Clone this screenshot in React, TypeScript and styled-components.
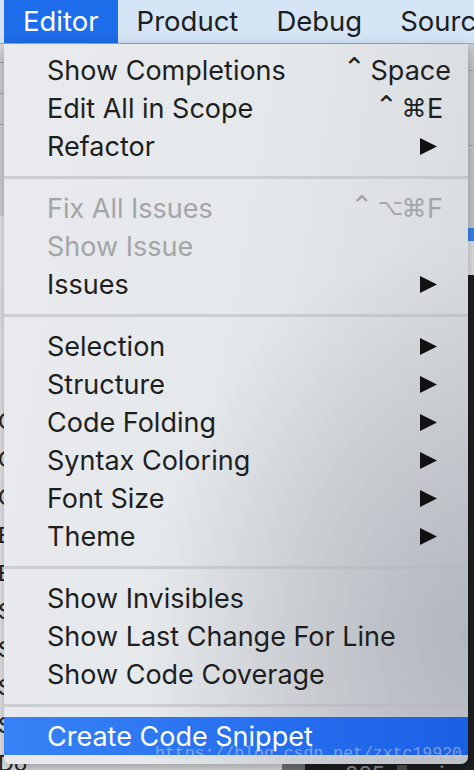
import React from "react";
import styled, { createGlobalStyle } from "styled-components";

const Global = createGlobalStyle`
  html, body { margin: 0; padding: 0; background: #1f2023; }
  body { font-family: Inter, "Noto Sans", "DejaVu Sans", sans-serif; }
  * { box-sizing: border-box; }
`;

const Screen = styled.div`
  position: relative;
  width: 474px;
  height: 770px;
  overflow: hidden;
  display: flex;
  flex-direction: column;
  background: #1f2023;
`;

const MenuBar = styled.div`
  height: 44px;
  flex: none;
  display: flex;
  align-items: stretch;
  padding-left: 4px;
  background: #d5e5f6;
  border-bottom: 1px solid #9fabb8;
`;

const BarItem = styled.div<{ $open?: boolean }>`
  display: flex;
  align-items: center;
  padding: 0 19px 1px;
  font-size: 27.5px;
  white-space: nowrap;
  color: ${(p) => (p.$open ? "#ffffff" : "#1b1d20")};
  background: ${(p) => (p.$open ? "#1d6ce9" : "transparent")};
`;

const Workspace = styled.div`
  flex: 1;
  display: flex;
  min-height: 0;
`;

const Navigator = styled.div`
  width: 282px;
  flex: none;
  display: flex;
  flex-direction: column;
  background: #eceef0;
`;

const NavToolbar = styled.div`
  height: 172px;
  flex: none;
  background: #d6d8db;
  display: flex;
  flex-direction: column;
  gap: 30px;
  padding-top: 18px;
`;

const HLine = styled.div`
  height: 1px;
  background: #a9acb0;
`;

const NavList = styled.div`
  display: flex;
  flex-direction: column;
  padding-top: 186px;
  font-size: 22px;
  color: #222;
  line-height: 38px;
`;

const NavItem = styled.div`
  white-space: nowrap;
  margin-left: -2px;
`;

const Splitter = styled.div`
  width: 23px;
  flex: none;
  background: #7d7e80;
`;

const EditorSide = styled.div`
  flex: 1;
  display: flex;
  flex-direction: column;
`;

const Inspector = styled.div`
  height: 184px;
  flex: none;
  background: #caced3;
  display: flex;
  flex-direction: column;
  gap: 74px;
  padding-top: 26px;
`;

const SelectedBar = styled.div`
  height: 13px;
  flex: none;
  background: #3d86f2;
`;

const Toolbar = styled.div`
  height: 34px;
  flex: none;
  background: #e4e6e8;
`;

const CodeArea = styled.div`
  flex: 1;
  background: #1f2023;
  display: flex;
  flex-direction: column;
  justify-content: flex-end;
  padding: 0 0 0 40px;
  color: #9b9ea3;
  font-size: 22px;
`;

const CodeLine = styled.div`
  display: flex;
  gap: 12px;
  align-items: center;
  height: 20px;
  margin-bottom: -14px;
`;

const Block = styled.span`
  width: 10px;
  height: 18px;
  background: #55585d;
`;

const Menu = styled.div`
  position: absolute;
  left: 4px;
  top: 44px;
  width: 464px;
  height: 720px;
  padding: 7px 0 9px;
  display: flex;
  flex-direction: column;
  border-radius: 0 0 7px 7px;
  overflow: hidden;
  background:
    radial-gradient(ellipse 70% 55% at 100% 82%, rgba(172, 177, 184, 0.85) 0%, rgba(172, 177, 184, 0) 100%),
    linear-gradient(100deg, #e8eaed 0%, #e6e9ec 45%, #d4d7db 100%);
  box-shadow: 0 6px 16px rgba(0, 0, 0, 0.35);
`;

const Row = styled.div<{ $disabled?: boolean; $active?: boolean }>`
  height: 38px;
  flex: none;
  display: flex;
  align-items: center;
  padding: 0 17px 0 43px;
  font-size: 27px;
  white-space: nowrap;
  color: ${(p) => (p.$active ? "#ffffff" : p.$disabled ? "#a3a5a8" : "#1d1e20")};
  background: ${(p) =>
    p.$active ? "linear-gradient(90deg, #3782f6 0%, #2a73f0 45%, #1a60e5 100%)" : "transparent"};
`;

const Label = styled.span`
  flex: 1;
`;

const Shortcut = styled.span`
  display: flex;
  align-items: center;
  height: 38px;
`;

const ModGlyph = styled.span<{ $size: number; $lift: number; $shift: number }>`
  width: 24.5px;
  text-align: center;
  font-family: "DejaVu Sans", sans-serif;
  font-size: ${(p) => p.$size}px;
  line-height: 1;
  position: relative;
  top: ${(p) => -p.$lift}px;
  left: ${(p) => p.$shift}px;
`;

const Key = styled.span`
  min-width: 24px;
`;

const Arrow = styled.svg`
  width: 17px;
  height: 17px;
  margin-right: 14px;
  flex: none;
`;

const Separator = styled.div`
  height: 24px;
  flex: none;
  display: flex;
  align-items: center;
  &::after {
    content: "";
    flex: 1;
    height: 3px;
    background: rgba(180, 184, 190, 0.55);
  }
`;

const Watermark = styled.div`
  position: absolute;
  left: 155px;
  top: 744px;
  font-family: "Liberation Mono", monospace;
  font-size: 16.5px;
  color: rgba(205, 210, 220, 0.55);
  white-space: nowrap;
  pointer-events: none;
`;

const glyphStyle: Record<string, { size: number; lift: number; shift: number }> = {
  "⌃": { size: 27, lift: 3, shift: -4 },
  "⌥": { size: 22, lift: 0, shift: 0 },
  "⌘": { size: 25, lift: 0, shift: -1 },
};

type Item =
  | { kind: "sep" }
  | { kind: "row"; label: string; mods?: string[]; key?: string; sub?: boolean; disabled?: boolean; active?: boolean };

const items: Item[] = [
  { kind: "row", label: "Show Completions", mods: ["⌃"], key: "Space" },
  { kind: "row", label: "Edit All in Scope", mods: ["⌃", "⌘"], key: "E" },
  { kind: "row", label: "Refactor", sub: true },
  { kind: "sep" },
  { kind: "row", label: "Fix All Issues", mods: ["⌃", "⌥", "⌘"], key: "F", disabled: true },
  { kind: "row", label: "Show Issue", disabled: true },
  { kind: "row", label: "Issues", sub: true },
  { kind: "sep" },
  { kind: "row", label: "Selection", sub: true },
  { kind: "row", label: "Structure", sub: true },
  { kind: "row", label: "Code Folding", sub: true },
  { kind: "row", label: "Syntax Coloring", sub: true },
  { kind: "row", label: "Font Size", sub: true },
  { kind: "row", label: "Theme", sub: true },
  { kind: "sep" },
  { kind: "row", label: "Show Invisibles" },
  { kind: "row", label: "Show Last Change For Line" },
  { kind: "row", label: "Show Code Coverage" },
  { kind: "sep" },
  { kind: "row", label: "Create Code Snippet", active: true },
];

const navItems = ["Cl", "Cell", "Cell", "Base", "Base", "Sw", "Sh", "Sw", "Sh", "Do", "Sc"];

export default function App() {
  return (
    <Screen>
      <Global />
      <MenuBar>
        <BarItem $open>Editor</BarItem>
        <BarItem>Product</BarItem>
        <BarItem>Debug</BarItem>
        <BarItem>Source Control</BarItem>
      </MenuBar>
      <Workspace>
        <Navigator>
          <NavToolbar>
            <HLine />
            <HLine />
            <HLine />
          </NavToolbar>
          <NavList>
            {navItems.map((n, i) => (
              <NavItem key={i}>{n}</NavItem>
            ))}
            <NavItem>    Login Controller</NavItem>
          </NavList>
        </Navigator>
        <Splitter />
        <EditorSide>
          <Inspector>
            <HLine />
            <HLine />
          </Inspector>
          <SelectedBar />
          <Toolbar />
          <CodeArea>
            <CodeLine>
              <span>225</span>
              <Block />
              <span style={{ marginLeft: 20 }}>j</span>
            </CodeLine>
          </CodeArea>
        </EditorSide>
      </Workspace>
      <Menu>
        {items.map((it, i) =>
          it.kind === "sep" ? (
            <Separator key={i} />
          ) : (
            <Row key={i} $disabled={it.disabled} $active={it.active}>
              <Label>{it.label}</Label>
              {it.key && (
                <Shortcut>
                  {it.mods?.map((m, j) => (
                    <ModGlyph
                      key={j}
                      $size={glyphStyle[m].size}
                      $lift={glyphStyle[m].lift}
                      $shift={glyphStyle[m].shift}
                    >
                      {m}
                    </ModGlyph>
                  ))}
                  <Key>{it.key}</Key>
                </Shortcut>
              )}
              {it.sub && (
                <Arrow viewBox="0 0 17 17">
                  <polygon points="0,0 17,8.5 0,17" fill="#111" />
                </Arrow>
              )}
            </Row>
          )
        )}
      </Menu>
      <Watermark>https://blog.csdn.net/zxtc19920</Watermark>
    </Screen>
  );
}
